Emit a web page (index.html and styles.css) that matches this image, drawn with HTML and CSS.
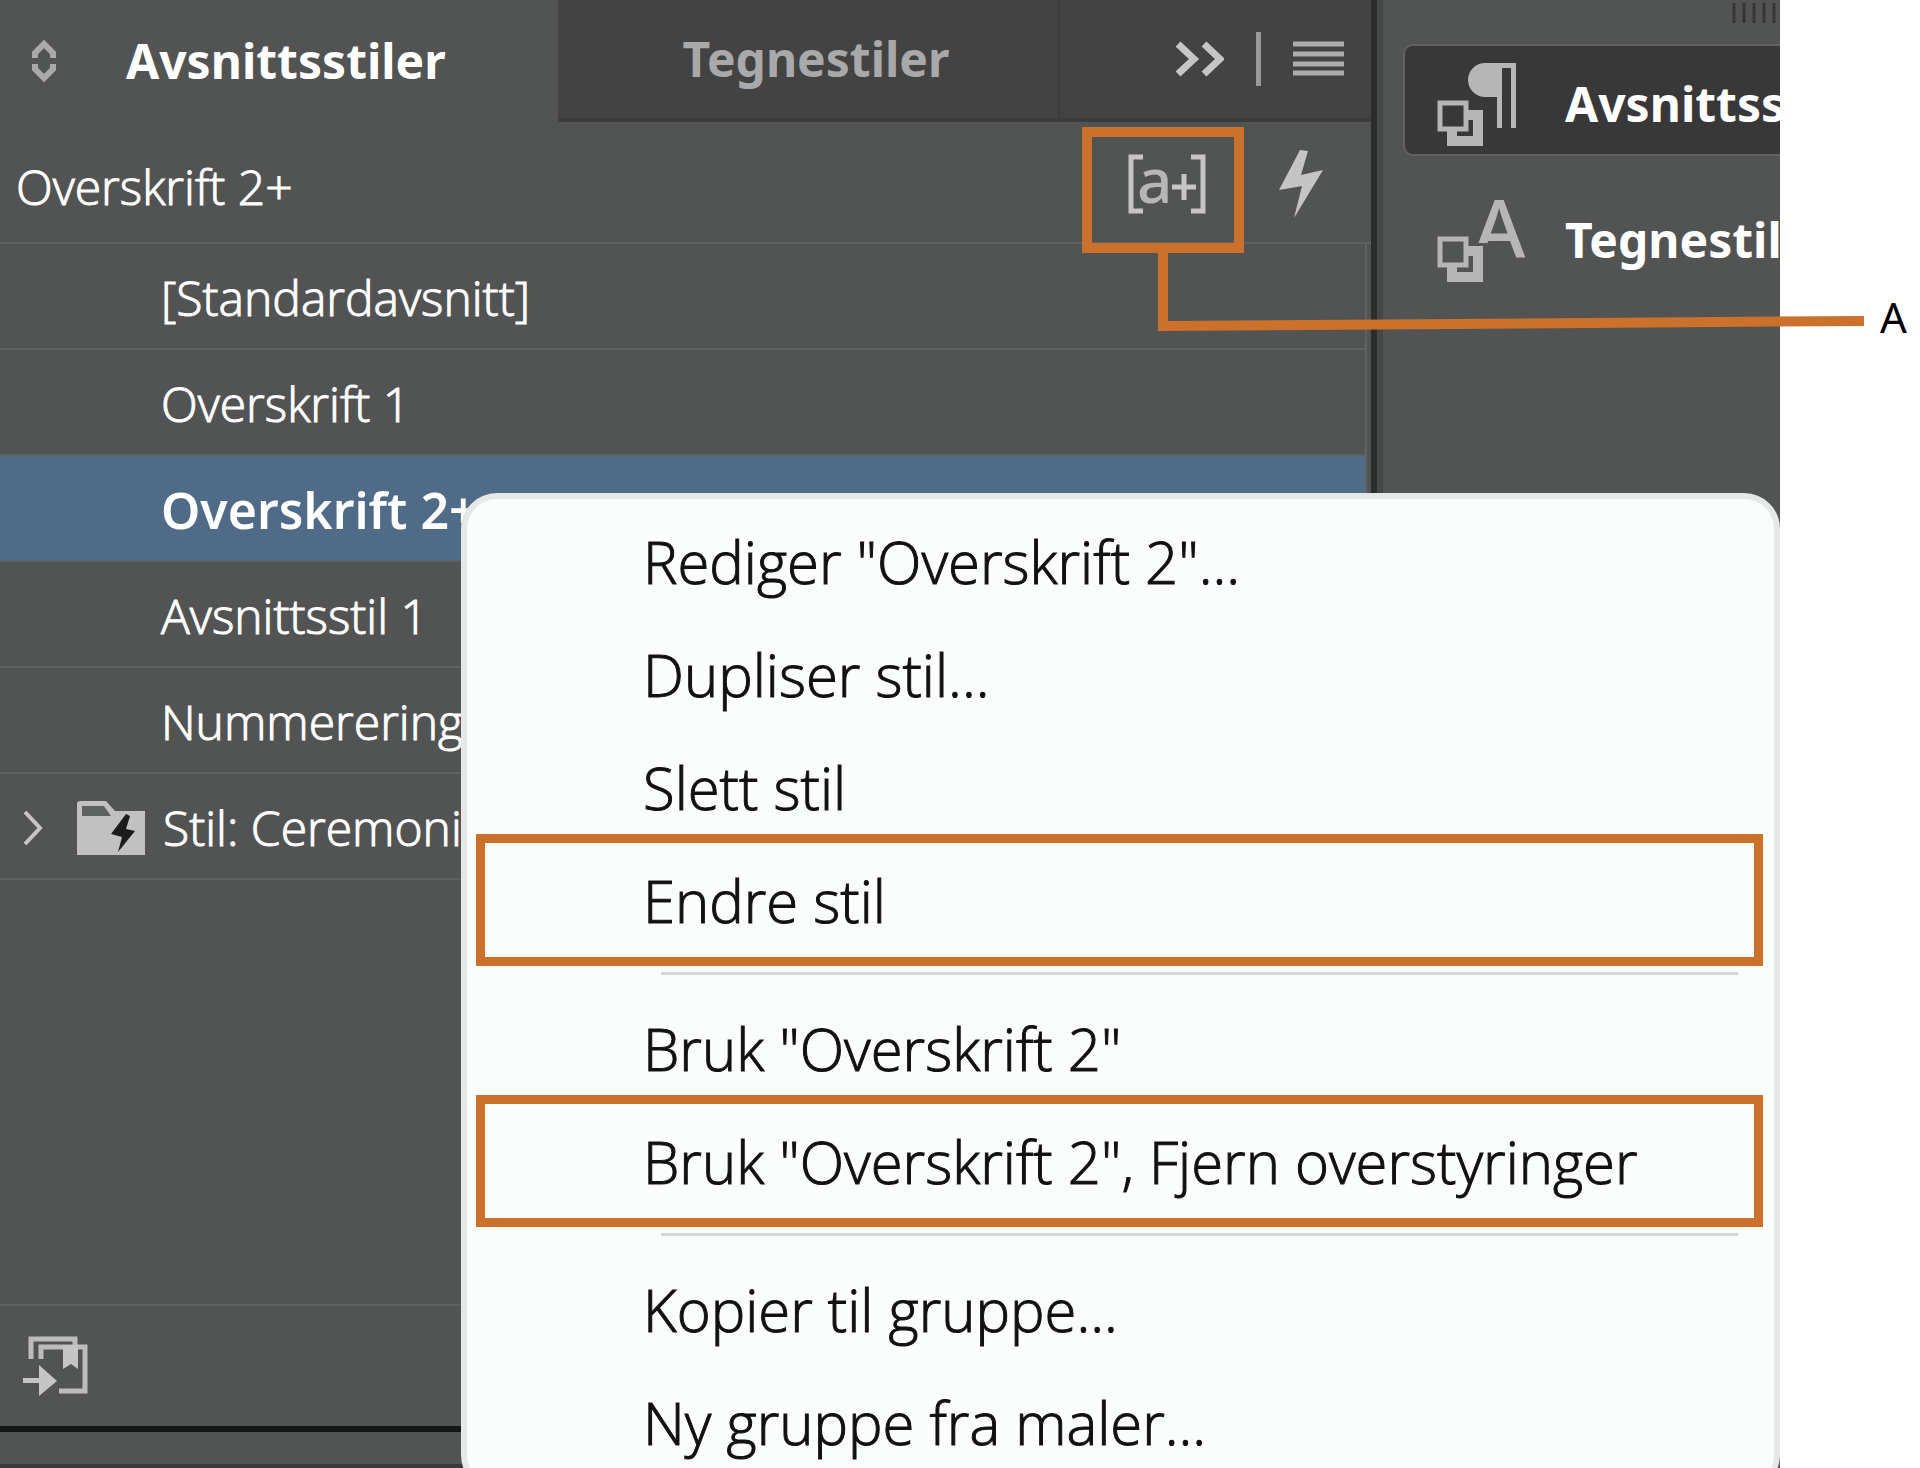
FILE: index.html
```html
<!DOCTYPE html>
<html lang="nb">
<head>
    <meta charset="UTF-8">
    <meta name="viewport" content="width=device-width, initial-scale=1.0">
    <title>Avsnittsstiler</title>
    <link rel="stylesheet" href="styles.css">
</head>
<body>
    <div class="figure">
        <div class="workspace">
            <section class="panel">
                <div class="tab-bar">
                    <button type="button" class="tab active">
                        <svg width="24" height="44" viewBox="0 0 24 44"><path d="M3 19 V14 L12 5 L21 14 V19 M3 25 V30 L12 39 L21 30 V25" fill="none" stroke="#a9aaa9" stroke-width="6"/></svg>
                        <span>Avsnittsstiler</span>
                    </button>
                    <button type="button" class="tab">Tegnestiler</button>
                    <div class="tab-tools">
                        <button type="button" class="icon-button" aria-label="Vis flere">
                            <svg width="48" height="36" viewBox="0 0 48 36"><path d="M2 3 L18 18 L2 33 M28 3 L44 18 L28 33" fill="none" stroke="#c6c6c6" stroke-width="7"/></svg>
                        </button>
                        <span class="tool-divider"></span>
                        <button type="button" class="icon-button" aria-label="Panelmeny">
                            <svg width="52" height="38" viewBox="0 0 52 38"><path d="M0 4 H51 M0 14 H51 M0 24 H51 M0 33 H51" stroke="#acacac" stroke-width="5"/></svg>
                        </button>
                    </div>
                </div>

                <div class="style-header">
                    <span class="current-style">Overskrift 2+</span>
                    <button type="button" class="icon-button" aria-label="Fjern overstyringer">
                        <svg width="80" height="62" viewBox="0 0 80 62">
                            <path d="M16 4 H4 V58 H16 M64 4 H76 V58 H64" fill="none" stroke="#c4c5c4" stroke-width="5"/>
                            <text class="icon-letter" x="10" y="50" font-size="62">a</text>
                            <path d="M45 34 H69 M57 21 V47" stroke="#c4c5c4" stroke-width="5"/>
                        </svg>
                    </button>
                    <button type="button" class="icon-button" aria-label="Hurtigbruk">
                        <svg width="44" height="68" viewBox="0 0 44 68"><path d="M21 0 L29 1 L22 25 L44 20 L15 68 L23 36 L0 40 Z" fill="#c4c5c4"/></svg>
                    </button>
                </div>

                <ul class="style-list">
                    <li class="style-row">[Standardavsnitt]</li>
                    <li class="style-row">Overskrift 1</li>
                    <li class="style-row selected">Overskrift 2+</li>
                    <li class="style-row">Avsnittsstil 1</li>
                    <li class="style-row">Nummerering</li>
                    <li class="style-row group">
                        <svg width="20" height="36" viewBox="0 0 20 36"><path d="M2 2 L17 18 L2 34" fill="none" stroke="#c4c5c4" stroke-width="4"/></svg>
                        <svg width="72" height="58" viewBox="0 0 72 58">
                            <path d="M2 56 V5 Q2 2 5 2 H31 L40 12 H70 V56 Z" fill="#c0c1c0"/>
                            <path d="M7 7 H29 L36 17 H7 Z" fill="#606261"/>
                            <path d="M51 15 L55 17 L51 30 L60 32 L43 53 L47 38 L36 35 Z" fill="#1c1c1c"/>
                        </svg>
                        <span>Stil: Ceremonial</span>
                    </li>
                </ul>

                <div class="panel-footer">
                    <button type="button" class="icon-button" aria-label="Last inn stiler">
                        <svg width="66" height="62" viewBox="0 0 66 62">
                            <path d="M8 24 V4 H52 V14 M18 24 V12 H62 V56 H36" fill="none" stroke="#bbbcbb" stroke-width="5"/>
                            <path d="M40 10 H55 V34 L48 29 L40 34 Z" fill="#c4c5c4"/>
                            <path d="M0 43 H16 V30 L34 46 L16 61 V48 H0 Z" fill="#c4c5c4"/>
                        </svg>
                    </button>
                </div>
                <div class="panel-edge"></div>
            </section>

            <aside class="dock">
                <svg class="grip" width="44" height="20" viewBox="0 0 44 20"><path d="M2 0 V20 M12 0 V20 M22 0 V20 M32 0 V20 M42 0 V20" stroke="#343534" stroke-width="3"/></svg>
                <button type="button" class="dock-item active">
                    <svg width="90" height="88" viewBox="0 0 90 88">
                        <path d="M30 50 H46 V86 H10 V70 H20 V76 H36 V60 H30 Z" fill="#b5b6b5"/>
                        <rect x="3" y="43" width="26" height="26" fill="#383838" stroke="#b5b6b5" stroke-width="5"/>
                        <path d="M79 3 V68 H74 V8 H65 V68 H60 V37 H48 A17 17 0 0 1 48 3 Z" fill="#b5b6b5"/>
                    </svg>
                    <span>Avsnittsstiler</span>
                </button>
                <button type="button" class="dock-item">
                    <svg width="90" height="88" viewBox="0 0 90 88">
                        <text class="icon-letter" x="36" y="61" font-size="80">A</text>
                        <path d="M26 47 H50 V64 H26 Z" fill="#525453"/>
                        <path d="M30 50 H46 V86 H10 V70 H20 V76 H36 V60 H30 Z" fill="#b5b6b5"/>
                        <rect x="3" y="43" width="26" height="26" fill="#525453" stroke="#b5b6b5" stroke-width="5"/>
                    </svg>
                    <span>Tegnestiler</span>
                </button>
            </aside>

            <div class="context-menu" role="menu">
                <button type="button" class="menu-item" role="menuitem">Rediger "Overskrift 2"...</button>
                <button type="button" class="menu-item" role="menuitem">Dupliser stil...</button>
                <button type="button" class="menu-item" role="menuitem">Slett stil</button>
                <button type="button" class="menu-item marked" role="menuitem">Endre stil</button>
                <hr class="menu-separator">
                <button type="button" class="menu-item" role="menuitem">Bruk "Overskrift 2"</button>
                <button type="button" class="menu-item marked" role="menuitem">Bruk "Overskrift 2", Fjern overstyringer</button>
                <hr class="menu-separator">
                <button type="button" class="menu-item" role="menuitem">Kopier til gruppe...</button>
                <button type="button" class="menu-item" role="menuitem">Ny gruppe fra maler...</button>
            </div>
        </div>

        <div class="margin">A</div>

        <!-- callout box and leader line to the letter in the margin -->
        <svg class="callout" width="782" height="206" viewBox="0 0 782 206">
            <rect x="5" y="5" width="152" height="116" fill="none" stroke="#cb712b" stroke-width="10"/>
            <path d="M76 121 H86 V194 L782 189 V199 L76 204 Z" fill="#cb712b"/>
        </svg>
    </div>
</body>
</html>
```
FILE: styles.css
```css
* {
    box-sizing: border-box;
}
body {
    margin: 0;
    font-family: 'Noto Sans', 'Open Sans', sans-serif;
    font-size: 48px;
    line-height: 68px;
    background-color: #fff;
}
button {
    font: inherit;
    color: inherit;
    border: none;
    background: none;
    padding: 0;
    text-align: left;
    cursor: pointer;
}
svg {
    display: block;
    flex: none;
}
.figure {
    position: relative;
    display: flex;
    height: 100vh;
    overflow: hidden;
}
.workspace {
    position: relative;
    flex: 1;
    min-width: 0;
    display: flex;
    overflow: hidden;
    background-color: #525453;
    color: #fff;
}

/* style panel */
.panel {
    flex: 1;
    min-width: 0;
    display: flex;
    flex-direction: column;
    border-right: 6px solid #2b2d2d;
}
.tab-bar {
    display: flex;
    height: 122px;
    font-weight: bold;
}
.tab {
    width: 502px;
    padding-left: 16px;
    text-align: center;
    background-color: #434343;
    border-right: 2px solid #3c3d3c;
    border-bottom: 4px solid #3b3c3b;
    color: #a9a9a9;
}
.tab.active {
    display: flex;
    align-items: center;
    gap: 70px;
    width: 558px;
    padding-left: 32px;
    border: none;
    background-color: #525453;
    color: #fff;
}
.tab-tools {
    flex: 1;
    display: flex;
    align-items: center;
    justify-content: flex-end;
    gap: 32px;
    padding-right: 26px;
    background-color: #434343;
    border-bottom: 4px solid #3b3c3b;
}
.tool-divider {
    width: 5px;
    height: 54px;
    background-color: #999;
}
.style-header {
    display: flex;
    align-items: center;
    gap: 72px;
    height: 122px;
    padding: 4px 48px 0 16px;
    border-bottom: 2px solid #606261;
    font-family: 'Open Sans', 'Noto Sans', sans-serif;
    font-weight: 300;
    -webkit-text-stroke: 1px;
}
.current-style {
    flex: 1;
    padding-top: 6px;
}
.icon-letter {
    font-family: 'Noto Sans', sans-serif;
    font-weight: 500;
    fill: #b5b6b5;
    -webkit-text-stroke: 0;
}
.style-list {
    flex: 1;
    list-style: none;
    margin: 0 4px 0 0;
    padding: 0;
    border-right: 2px solid #606261;
    font-family: 'Open Sans', 'Noto Sans', sans-serif;
    font-weight: 300;
    -webkit-text-stroke: 1px;
}
.style-row {
    display: flex;
    align-items: center;
    height: 106px;
    padding-left: 161px;
    padding-top: 4px;
    border-bottom: 2px solid #606261;
    white-space: nowrap;
}
.style-row.selected {
    background-color: #4f6b87;
    font-family: 'Noto Sans', 'Open Sans', sans-serif;
    font-size: 50px;
    font-weight: 600;
    -webkit-text-stroke: 0;
}
.style-row.group {
    gap: 16px;
    padding-left: 23px;
}
.style-row.group svg + svg {
    margin-left: 16px;
}
.panel-footer {
    display: flex;
    align-items: center;
    height: 122px;
    padding-left: 23px;
    border-top: 2px solid #606261;
}
.panel-edge {
    height: 42px;
    border-top: 6px solid #151616;
    border-bottom: 4px solid #3b3a3b;
}

/* collapsed panels */
.dock {
    width: 403px;
    display: flex;
    flex-direction: column;
    gap: 28px;
    overflow: hidden;
    border-left: 6px solid #454746;
    font-weight: bold;
}
.grip {
    align-self: flex-end;
    margin: 3px 4px -5px 0;
}
.dock-item {
    display: flex;
    align-items: center;
    gap: 38px;
    height: 108px;
    margin-left: 22px;
    padding-left: 32px;
    padding-top: 8px;
    white-space: nowrap;
}
.dock-item.active {
    background-color: #383838;
    border-radius: 8px 0 0 8px;
    box-shadow: 0 0 0 2px #606261;
}

/* context menu */
.context-menu {
    position: absolute;
    top: 493px;
    left: 461px;
    right: 0;
    padding: 6px 0;
    background-color: #fbfdfc;
    border: 6px solid #e6e7e7;
    border-radius: 36px;
    color: #111;
    font-family: 'Open Sans', 'Noto Sans', sans-serif;
    font-size: 58px;
    font-weight: 300;
    -webkit-text-stroke: 1px;
}
.menu-item {
    position: relative;
    display: block;
    width: 100%;
    padding-left: 176px;
    line-height: 113px;
    white-space: nowrap;
}
.menu-item.marked::after {
    content: "";
    position: absolute;
    top: -10px;
    bottom: -9px;
    left: 9px;
    right: 11px;
    border: 9px solid #cb712b;
}
.menu-separator {
    height: 3px;
    margin: 15px 36px 17px 194px;
    border: none;
    background-color: #d3d8d9;
}

/* annotation */
.margin {
    width: 140px;
    padding: 283px 0 0 100px;
    font-size: 42px;
    color: #000;
}
.callout {
    position: absolute;
    top: 127px;
    right: 56px;
}
```
